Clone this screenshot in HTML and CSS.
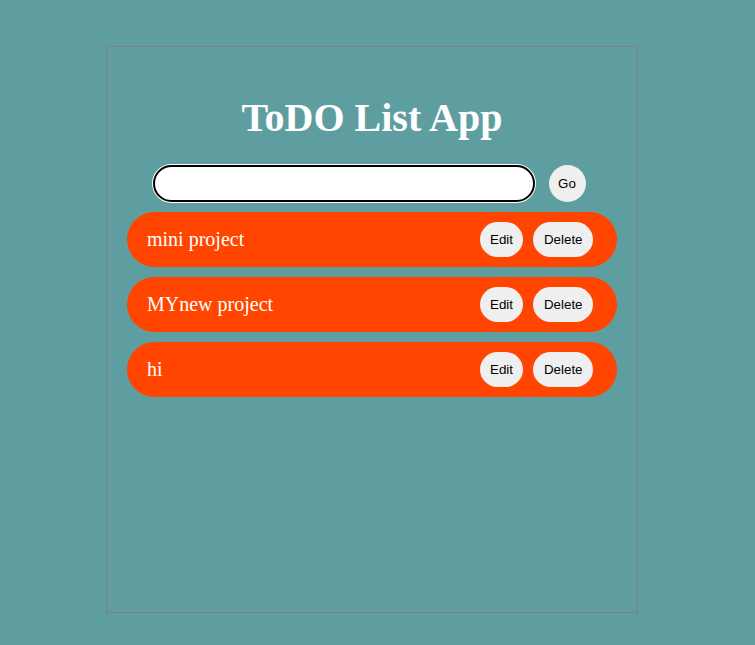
FILE: index.html
```html
<!DOCTYPE html>
<html>
<head>
<meta charset="utf-8">
<title>ToDO List App</title>
<link rel="stylesheet" href="styles.css">
</head>
<body>
<div class="app">
  <h1 class="title">ToDO List App</h1>
  <div class="entry">
    <input class="entry-input" type="text">
    <button class="btn btn-go">Go</button>
  </div>
  <ul class="list">
    <li class="item"><span class="item-text">mini project</span><span class="actions"><button class="btn">Edit</button><button class="btn">Delete</button></span></li>
    <li class="item"><span class="item-text">MYnew project</span><span class="actions"><button class="btn">Edit</button><button class="btn">Delete</button></span></li>
    <li class="item"><span class="item-text">hi</span><span class="actions"><button class="btn">Edit</button><button class="btn">Delete</button></span></li>
  </ul>
</div>
</body>
</html>
```
FILE: styles.css
```css
html, body {
  margin: 0;
  padding: 0;
}
body {
  background: #5f9ea0;
  font-family: "Liberation Serif", "Times New Roman", serif;
  padding: 46px 0 0 106px;
  height: 645px;
  box-sizing: border-box;
}
.app {
  box-sizing: border-box;
  width: 532px;
  height: 567px;
  border: 1px solid #808080;
  padding: 48px 20px 0 20px;
}
.title {
  margin: 0 0 24px 0;
  text-align: center;
  color: #fff;
  font-size: 40px;
  font-weight: bold;
  line-height: 46px;
}
.entry {
  display: flex;
  justify-content: center;
  align-items: center;
  gap: 14px;
  margin-bottom: 10px;
  padding-right: 6px;
}
.entry-input {
  box-sizing: border-box;
  width: 382px;
  height: 37px;
  border: 2px solid #000;
  border-radius: 19px;
  box-shadow: 0 0 0 1px #fff;
  background: #fff;
  margin: 0;
  padding: 0 12px;
  outline: none;
}
.btn {
  font-family: "Liberation Sans", Arial, sans-serif;
  font-size: 13.333px;
  color: #000;
  background: #efefef;
  border: none;
  border-radius: 18px;
  height: 35px;
  padding: 0 10px;
  margin: 0;
}
.btn-go {
  width: 37px;
  height: 37px;
  padding: 0;
  border-radius: 50%;
}
.list {
  list-style: none;
  margin: 0;
  padding: 0;
  display: flex;
  flex-direction: column;
  gap: 10px;
}
.item {
  display: flex;
  align-items: center;
  justify-content: space-between;
  height: 55px;
  border-radius: 28px;
  background: #ff4500;
  padding: 0 24px 0 20px;
  box-sizing: border-box;
}
.item-text {
  color: #fff;
  font-size: 20px;
}
.actions {
  display: flex;
  gap: 10px;
}
.actions .btn:first-child {
  padding: 0 10.5px;
}
.actions .btn:last-child {
  padding: 0 10.5px;
}
```
